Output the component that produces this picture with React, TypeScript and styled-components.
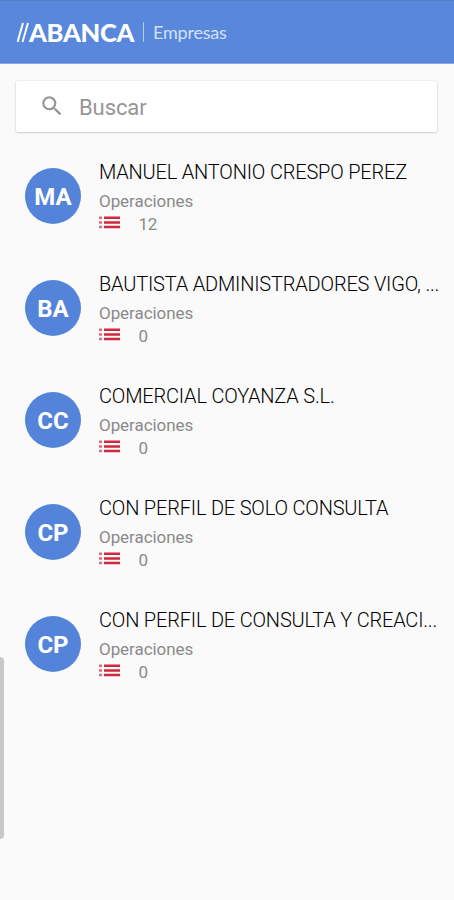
import React from "react";
import styled, { createGlobalStyle } from "styled-components";

const GlobalStyle = createGlobalStyle`
  * { box-sizing: border-box; }
  body { margin: 0; background: #fafafa; font-family: Roboto, "Liberation Sans", sans-serif; }
`;

const Screen = styled.div`
  position: relative;
  width: 454px;
  height: 900px;
  overflow: hidden;
  background: #fafafa;
`;

const Header = styled.header`
  display: flex;
  align-items: center;
  height: 64px;
  padding: 0 0 0 17px;
  background: #5887db;
  border-top: 1px solid #5280cb;
  border-bottom: 1px solid #86a8e4;
  color: #fff;
`;

const Slashes = styled.svg`
  display: block;
  width: 13px;
  height: 21px;
  margin-right: -1px;
`;

const Brand = styled.span`
  width: 105px;
  font: 900 25.5px/30px Lato, sans-serif;
  letter-spacing: -0.3px;
  white-space: nowrap;
`;

const Divider = styled.span`
  width: 1px;
  height: 20px;
  margin: 0 9px 0 9px;
  background: #b4caf1;
`;

const Product = styled.span`
  font: 400 18px/30px Lato, sans-serif;
  letter-spacing: -0.2px;
  color: #d3e1f8;
  white-space: nowrap;
`;

const Search = styled.label`
  display: flex;
  align-items: center;
  height: 51px;
  margin: 17px 17px 0 16px;
  padding: 2px 0 0 23px;
  border-radius: 2px;
  background: #fff;
  box-shadow: 0 0 2px rgba(0, 0, 0, 0.16), 0 1px 2px rgba(0, 0, 0, 0.14);
`;

const SearchIcon = styled.svg`
  display: block;
  width: 26px;
  height: 26px;
  margin: -3px 14px 0 0;
  fill: #969696;
`;

const Placeholder = styled.span`
  font-size: 22px;
  line-height: 28px;
  letter-spacing: -0.1px;
  color: #969696;
`;

const List = styled.ul`
  list-style: none;
  margin: 8px 0 0;
  padding: 0;
`;

const Row = styled.li`
  display: flex;
  height: 112.1px;
  padding-left: 25px;
`;

const Avatar = styled.div`
  flex: none;
  display: flex;
  align-items: center;
  justify-content: center;
  width: 56px;
  height: 56px;
  margin: 28px 18px 0 0;
  padding-top: 2px;
  border-radius: 50%;
  background: #5484d9;
  color: #fff;
  font-size: 24px;
  font-weight: 700;
`;

const Details = styled.div`
  padding-top: 20px;
  white-space: nowrap;
`;

const Name = styled.div`
  font-size: 20px;
  font-weight: 300;
  line-height: 24px;
  letter-spacing: -0.19px;
  color: #000;
`;

const Caption = styled.div`
  margin-top: 6.5px;
  font-size: 17px;
  line-height: 20px;
  letter-spacing: -0.06px;
  color: #8a8a8a;
`;

const Count = styled.div`
  display: flex;
  align-items: center;
  height: 25px;
  padding-top: 1px;
  font-size: 17px;
  line-height: 24px;
  letter-spacing: -0.2px;
  color: #8a8a8a;
`;

const ListIcon = styled.svg`
  display: block;
  width: 21px;
  height: 13px;
  margin: -2px 18.5px 0 0;
`;

const Handle = styled.div`
  position: absolute;
  left: 0;
  top: 657px;
  width: 4px;
  height: 182px;
  border-radius: 0 4px 4px 0;
  background: #c8c8c6;
`;

const clients = [
  { initials: "MA", name: "MANUEL ANTONIO CRESPO PEREZ", count: 12 },
  { initials: "BA", name: "BAUTISTA ADMINISTRADORES VIGO, ...", count: 0 },
  { initials: "CC", name: "COMERCIAL COYANZA S.L.", count: 0 },
  { initials: "CP", name: "CON PERFIL DE SOLO CONSULTA", count: 0 },
  { initials: "CP", name: "CON PERFIL DE CONSULTA Y CREACI...", count: 0 },
];

export default function App() {
  return (
    <Screen>
      <GlobalStyle />
      <Header>
        <Slashes viewBox="0 0 13 21" stroke="#fff" strokeWidth="2">
          <path d="M.5 20 6 1M5.5 20 11 1" />
        </Slashes>
        <Brand>ABANCA</Brand>
        <Divider />
        <Product>Empresas</Product>
      </Header>
      <Search>
        <SearchIcon viewBox="0 0 24 24">
          <path d="M15.5 14h-.79l-.28-.27A6.471 6.471 0 0 0 16 9.5 6.5 6.5 0 1 0 9.5 16c1.61 0 3.09-.59 4.23-1.57l.27.28v.79l5 4.99L20.49 19l-4.99-5zm-6 0C7.01 14 5 11.99 5 9.5S7.01 5 9.5 5 14 7.01 14 9.5 11.99 14 9.5 14z" />
        </SearchIcon>
        <Placeholder>Buscar</Placeholder>
      </Search>
      <List>
        {clients.map((client) => (
          <Row key={client.name}>
            <Avatar>{client.initials}</Avatar>
            <Details>
              <Name>{client.name}</Name>
              <Caption>Operaciones</Caption>
              <Count>
                <ListIcon viewBox="0 0 21 13" fill="#d0273c">
                  <path d="M5 .6h16v2.5H5zM5 5.2h16v2.5H5zM5 9.8h16v2.5H5z" />
                  <path opacity=".65" d="M0 .6h3v2.5H0zM0 5.2h3v2.5H0zM0 9.8h3v2.5H0z" />
                </ListIcon>
                {client.count}
              </Count>
            </Details>
          </Row>
        ))}
      </List>
      <Handle />
    </Screen>
  );
}
